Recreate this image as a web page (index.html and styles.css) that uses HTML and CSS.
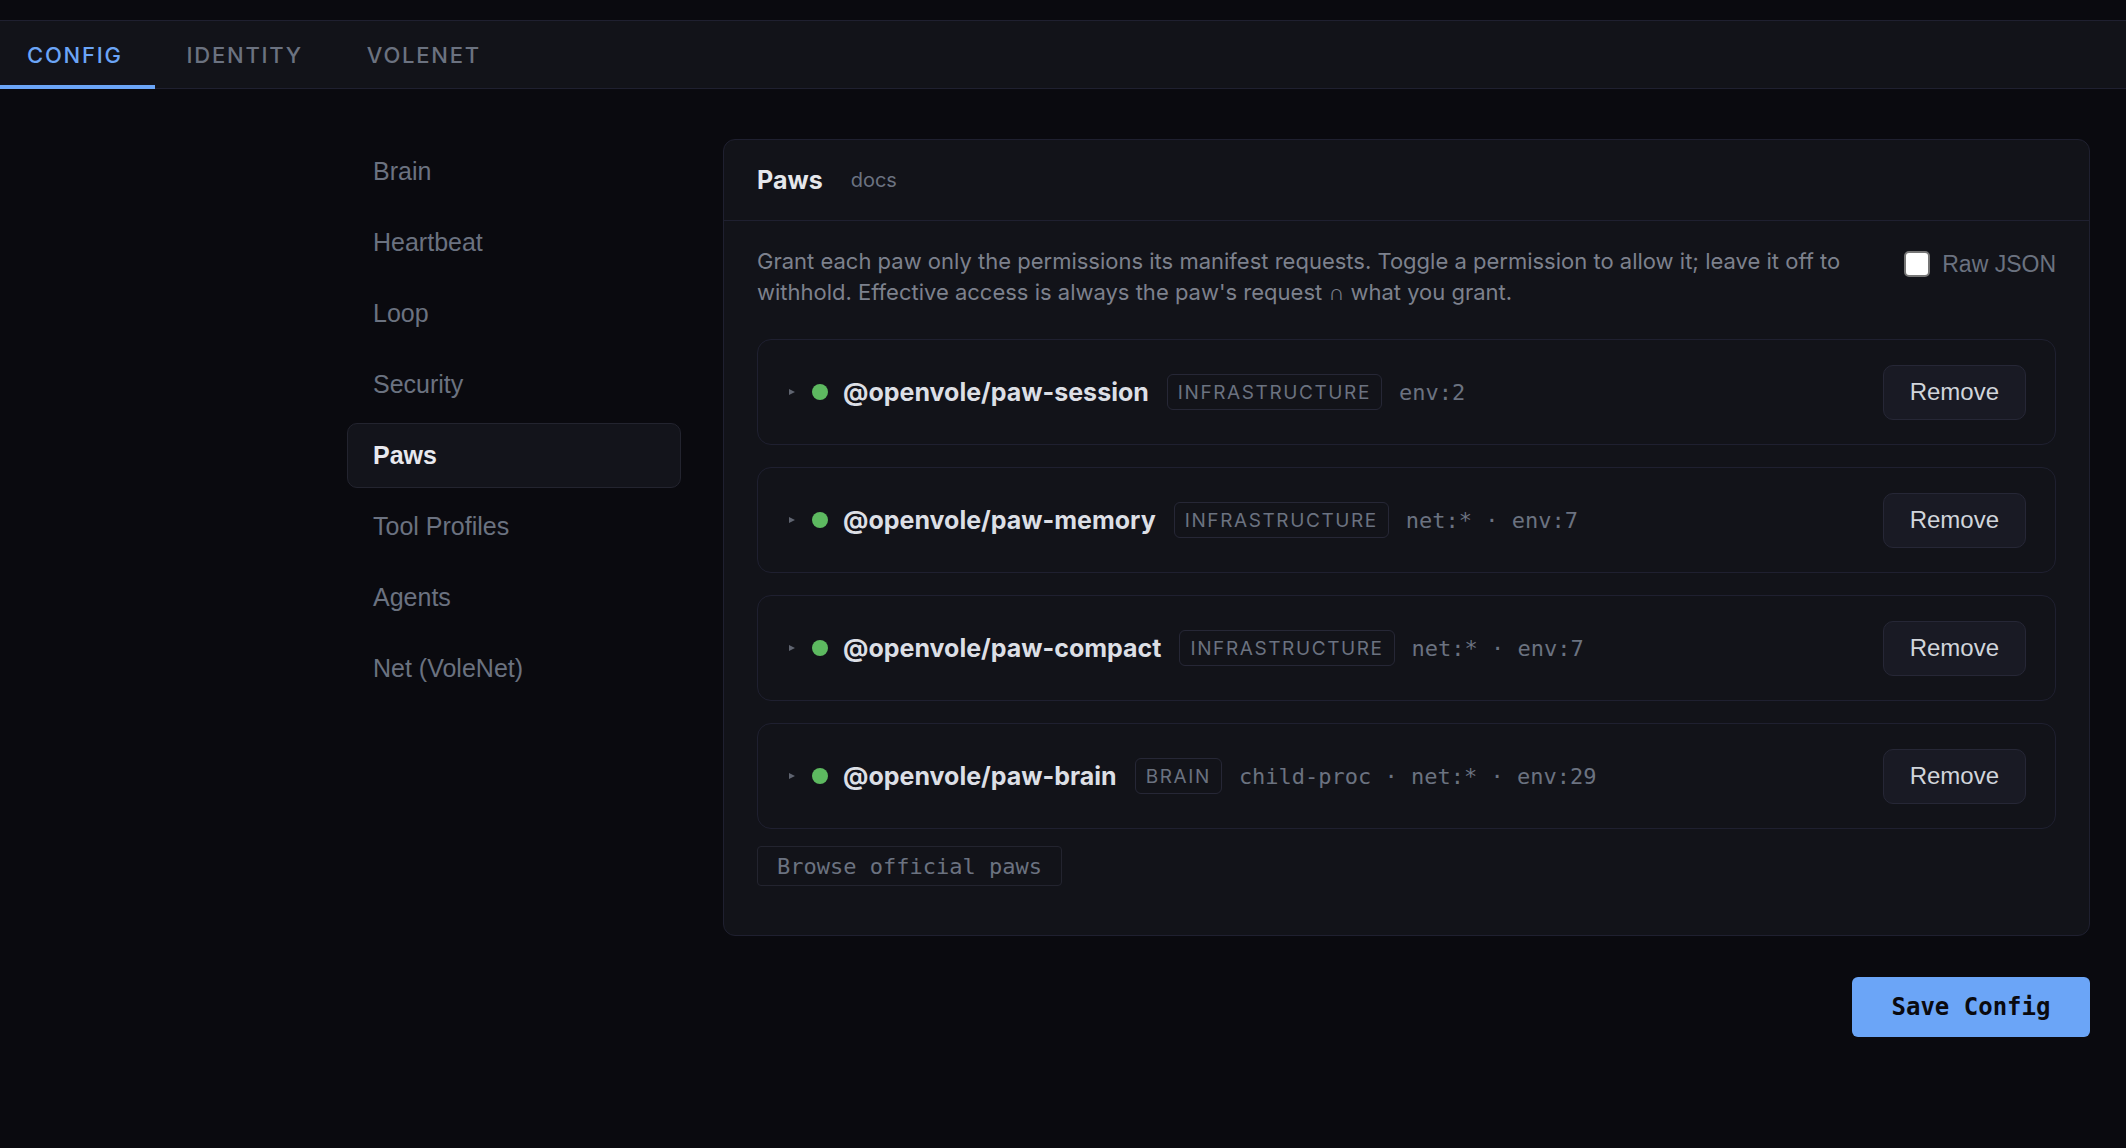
FILE: index.html
```html
<!DOCTYPE html>
<html lang="en">

<head>
    <meta charset="UTF-8">
    <meta name="viewport" content="width=device-width, initial-scale=1.0">
    <link rel="stylesheet" href="styles.css">
</head>

<body>
    <div class="topstrip"></div>

    <nav class="tabs">
        <a class="tab active">CONFIG</a>
        <a class="tab">IDENTITY</a>
        <a class="tab">VOLENET</a>
    </nav>

    <main class="layout">
        <aside class="sidenav">
            <a class="side-item">Brain</a>
            <a class="side-item">Heartbeat</a>
            <a class="side-item">Loop</a>
            <a class="side-item">Security</a>
            <a class="side-item active">Paws</a>
            <a class="side-item">Tool Profiles</a>
            <a class="side-item">Agents</a>
            <a class="side-item">Net (VoleNet)</a>
        </aside>

        <section class="content">
            <div class="panel">
                <div class="panel-head">
                    <h2 class="panel-title">Paws</h2>
                    <a class="docs">docs</a>
                </div>
                <div class="panel-body">
                    <div class="intro">
                        <p class="hint">Grant each paw only the permissions its manifest requests. Toggle a permission to allow it; leave it off to withhold. Effective access is always the paw's request ∩ what you grant.</p>
                        <label class="raw">
                            <input type="checkbox" class="check">
                            Raw JSON
                        </label>
                    </div>

                    <div class="paw-list">
                        <div class="paw">
                            <span class="caret"></span>
                            <span class="dot"></span>
                            <span class="paw-name">@openvole/paw-session</span>
                            <span class="badge">INFRASTRUCTURE</span>
                            <span class="meta">env:2</span>
                            <button class="remove">Remove</button>
                        </div>
                        <div class="paw">
                            <span class="caret"></span>
                            <span class="dot"></span>
                            <span class="paw-name">@openvole/paw-memory</span>
                            <span class="badge">INFRASTRUCTURE</span>
                            <span class="meta">net:* · env:7</span>
                            <button class="remove">Remove</button>
                        </div>
                        <div class="paw">
                            <span class="caret"></span>
                            <span class="dot"></span>
                            <span class="paw-name">@openvole/paw-compact</span>
                            <span class="badge">INFRASTRUCTURE</span>
                            <span class="meta">net:* · env:7</span>
                            <button class="remove">Remove</button>
                        </div>
                        <div class="paw">
                            <span class="caret"></span>
                            <span class="dot"></span>
                            <span class="paw-name">@openvole/paw-brain</span>
                            <span class="badge">BRAIN</span>
                            <span class="meta">child-proc · net:* · env:29</span>
                            <button class="remove">Remove</button>
                        </div>
                    </div>

                    <button class="browse">Browse official paws</button>
                </div>
            </div>

            <div class="actions">
                <button class="save">Save Config</button>
            </div>
        </section>
    </main>
</body>

</html>
```

FILE: styles.css
```css
body {
    margin: 0;
    background: #0a0a0f;
    font-family: "Inter", "Noto Sans", sans-serif;
    color: #e5e7eb;
}

button {
    cursor: pointer;
}

.topstrip {
    height: 20px;
}

/* top tabs */

.tabs {
    display: flex;
    height: 67px;
    background: #121319;
    border-top: 1px solid #1f2030;
    border-bottom: 1px solid #1f2030;
}

.tab {
    display: flex;
    align-items: center;
    padding: 4px 32px 0;
    margin-bottom: -1px;
    border-bottom: 4px solid transparent;
    font-size: 22px;
    font-weight: 500;
    letter-spacing: 0.08em;
    color: #6b7280;
}

.tab:first-child {
    margin-left: -5px;
}

.tab.active {
    color: #6ba5f7;
    border-bottom-color: #6ba5f7;
}

/* page layout */

.layout {
    display: grid;
    grid-template-columns: 334px 1367px;
    column-gap: 42px;
    padding: 50px 0 0 347px;
}

.sidenav {
    display: flex;
    flex-direction: column;
    gap: 6px;
}

.side-item {
    display: flex;
    align-items: center;
    height: 65px;
    box-sizing: border-box;
    padding: 0 25px;
    border: 1px solid transparent;
    border-radius: 10px;
    font-family: "Liberation Sans", Arial, sans-serif;
    font-size: 25px;
    color: #6b7280;
}

.side-item.active {
    background: #13141b;
    border-color: #23242f;
    color: #e8e9ee;
    font-weight: bold;
}

/* panel */

.panel {
    background: #121319;
    border: 1px solid #1f2030;
    border-radius: 12px;
}

.panel-head {
    display: flex;
    align-items: center;
    gap: 28px;
    height: 80px;
    padding: 0 33px;
    border-bottom: 1px solid #1f2030;
}

.panel-title {
    margin: 0;
    font-size: 25px;
    font-weight: 700;
    color: #e5e7eb;
}

.docs {
    font-size: 20px;
    color: #6b7280;
}

.panel-body {
    padding: 25px 33px 49px;
}

.intro {
    display: flex;
    justify-content: space-between;
    align-items: flex-start;
    gap: 36px;
    margin-bottom: 31px;
}

.hint {
    margin: 0;
    font-size: 22px;
    line-height: 31px;
    color: #7d818d;
}

.raw {
    display: flex;
    align-items: center;
    gap: 12px;
    margin-top: 3px;
    height: 30px;
    white-space: nowrap;
    font-family: "Liberation Sans", Arial, sans-serif;
    font-size: 23px;
    color: #6b7280;
}

.check {
    appearance: none;
    margin: 0;
    width: 26px;
    height: 26px;
    background: #ffffff;
    border: 2px solid #767676;
    border-radius: 5px;
}

/* paw rows */

.paw-list {
    display: flex;
    flex-direction: column;
    gap: 22px;
}

.paw {
    display: flex;
    align-items: center;
    height: 106px;
    box-sizing: border-box;
    padding: 0 29px;
    border: 1px solid #1f2030;
    border-radius: 14px;
}

.caret {
    width: 0;
    height: 0;
    border-left: 6px solid #5f6470;
    border-top: 3.5px solid transparent;
    border-bottom: 3.5px solid transparent;
    margin: 0 17px 0 2px;
}

.dot {
    width: 16px;
    height: 16px;
    border-radius: 50%;
    background: #5db960;
    margin-right: 15px;
}

.paw-name {
    font-size: 25px;
    font-weight: 700;
    color: #dcdfe5;
    margin-right: 18px;
}

.badge {
    display: flex;
    align-items: center;
    height: 36px;
    box-sizing: border-box;
    padding: 0 10px;
    border: 1px solid #262736;
    border-radius: 6px;
    font-size: 19px;
    letter-spacing: 1.6px;
    color: #6b7280;
    margin-right: 17px;
}

.meta {
    font-family: "DejaVu Sans Mono", monospace;
    font-size: 22px;
    color: #6b7280;
}

.remove {
    margin-left: auto;
    height: 55px;
    padding: 0 26px;
    background: #191a24;
    border: 1px solid #262736;
    border-radius: 10px;
    font-family: "Liberation Sans", Arial, sans-serif;
    font-size: 24px;
    color: #d1d5db;
}

.browse {
    margin-top: 17px;
    height: 40px;
    padding: 0 19px;
    background: transparent;
    border: 1px solid #23242f;
    border-radius: 4px;
    font-family: "DejaVu Sans Mono", monospace;
    font-size: 22px;
    color: #6b7280;
}

/* footer action */

.actions {
    display: flex;
    justify-content: flex-end;
    margin-top: 41px;
}

.save {
    width: 238px;
    height: 60px;
    background: #6ba5f7;
    border: none;
    border-radius: 6px;
    font-family: "DejaVu Sans Mono", monospace;
    font-size: 24px;
    font-weight: bold;
    color: #0a0a0f;
}
```
